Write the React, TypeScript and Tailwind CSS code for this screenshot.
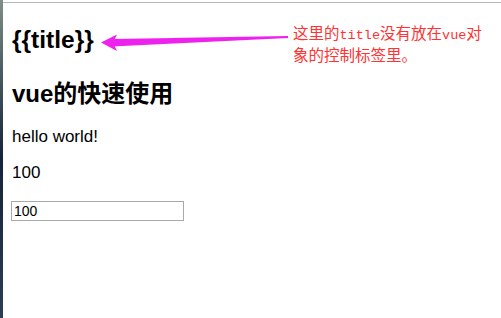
import React from "react";

const SANS = { fontFamily: '"Liberation Sans", "Noto Sans CJK SC", sans-serif' };

function Arrow() {
  return (
    <svg className="absolute left-0 top-0" width="501" height="80" viewBox="0 0 501 80">
      {/* tapered shaft */}
      <polygon points="112,39 288,36 288,38 112,46.5" fill="#ee22ee" />
      {/* arrow head */}
      <polygon points="101,42.5 117,34.5 113,42.5 117,51" fill="#ee22ee" />
    </svg>
  );
}

function Note() {
  return (
    <div
      className="absolute left-[293px] top-[23px] text-[15.5px] leading-[18px] text-[#ff3333]"
      style={{ fontFamily: '"Noto Sans CJK SC", sans-serif' }}
    >
      <div>
        这里的<span className="font-['Liberation_Mono'] text-[13.5px]">title</span>没有放在
        <span className="font-['Liberation_Mono'] text-[13.5px]">vue</span>对
      </div>
      <div>象的控制标签里。</div>
    </div>
  );
}

export default function App() {
  return (
    <div className="relative flex h-[318px] w-[501px] overflow-hidden bg-white">
      {/* window edge */}
      <div className="w-[3px] shrink-0 bg-gradient-to-b from-[#7f8e86] via-[#15243a] to-[#2c3d55]" />

      <div className="flex flex-1 flex-col">
        <div className="h-[2px]" />
        <div className="h-px bg-[#b8b8b8]" />

        <div className="pl-[9px] text-black" style={SANS}>
          <h1 className="mt-[21px] text-[24.5px] font-bold leading-[32px]">{"{{title}}"}</h1>
          <h2 className="mt-[22px] text-[24px] font-bold leading-[32px]">vue的快速使用</h2>
          <p className="mt-[15px] text-[17px] leading-[24px]">hello world!</p>
          <p className="mt-[12px] text-[17px] leading-[24px]">100</p>
          <input
            defaultValue="100"
            className="ml-[-1px] mt-[16px] block h-[20px] w-[173px] border border-[#a9a9a9] px-[2px] text-[14px] leading-[18px] outline-none"
            style={SANS}
          />
        </div>
      </div>

      <Arrow />
      <Note />
    </div>
  );
}
